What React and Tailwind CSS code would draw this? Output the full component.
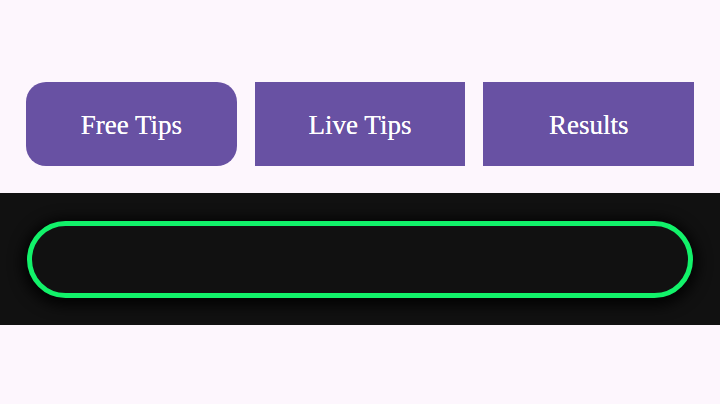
import React from 'react';

const tabs = [
  { label: 'Free Tips', rounded: true },
  { label: 'Live Tips', rounded: false },
  { label: 'Results', rounded: false },
];

export default function App() {
  return (
    <div className="w-[720px] h-[404px] bg-[#fdf6fd] flex flex-col" style={{ fontFamily: '"Liberation Serif", serif' }}>
      <div className="flex gap-[18px] px-[26px] pt-[82px]">
        {tabs.map(t => (
          <button
            key={t.label}
            className={`flex-1 h-[84px] bg-[#6851a3] text-white text-[27px] pt-[3px] flex items-center justify-center [text-shadow:0_0_0.4px_#fff] ${t.rounded ? 'rounded-[20px]' : ''}`}
          >
            {t.label}
          </button>
        ))}
      </div>
      <div className="mt-[27px] h-[132px] bg-[#111111] flex items-center px-[27px]">
        <div className="w-full h-[77px] rounded-full border-[5px] border-[#12f26a] shadow-[0_3px_14px_5px_rgba(0,0,0,0.85)]"></div>
      </div>
    </div>
  );
}
